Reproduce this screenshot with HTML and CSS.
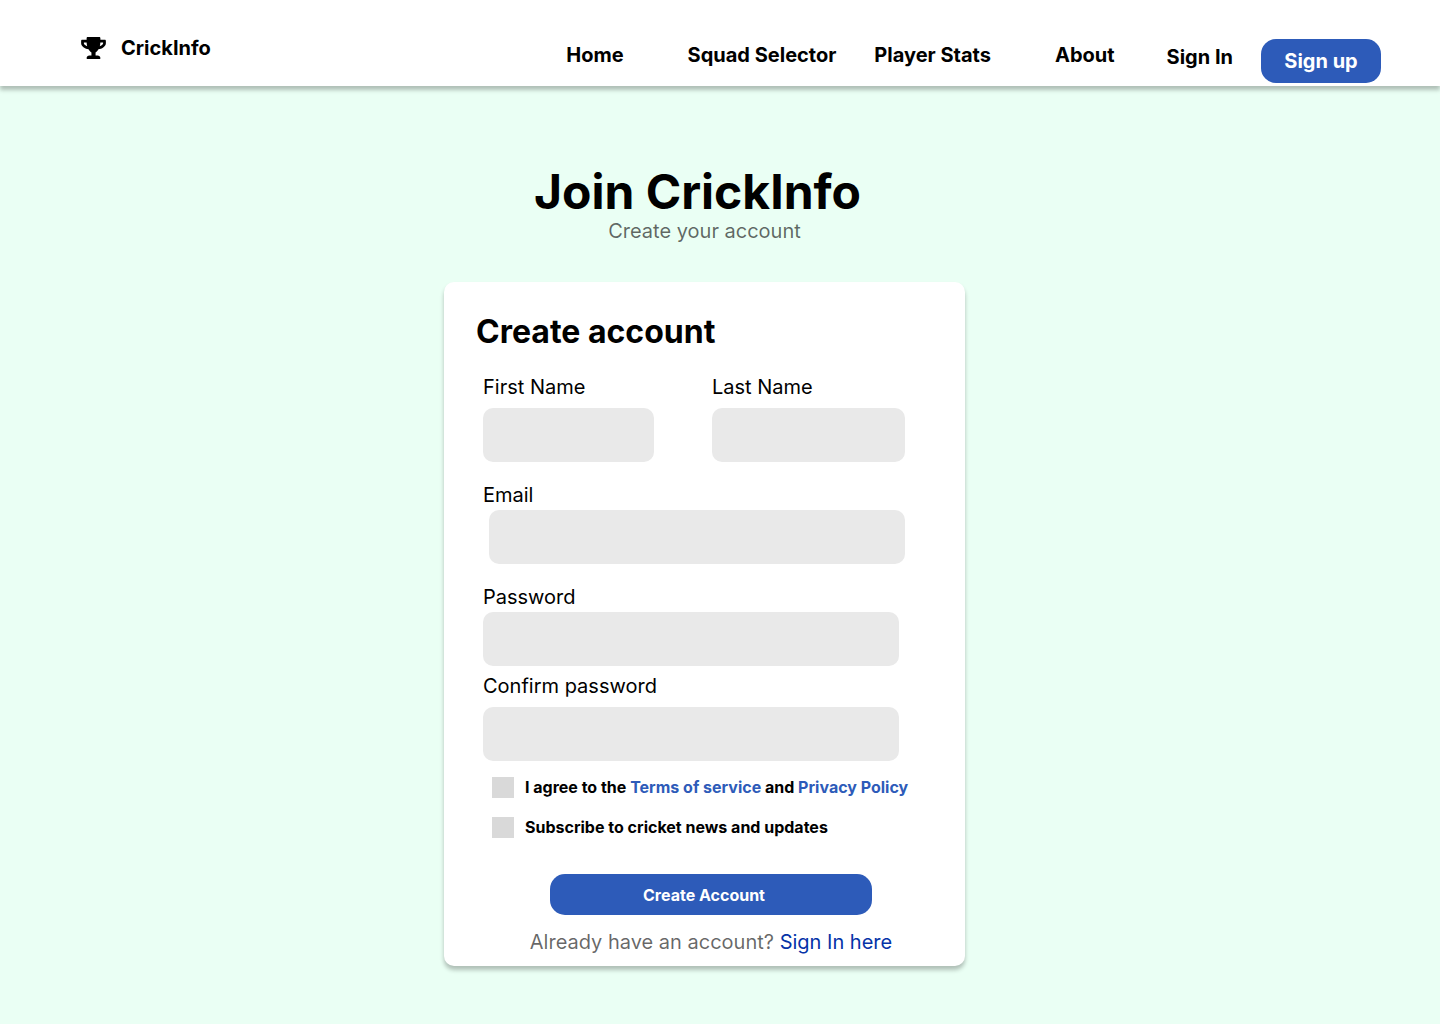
FILE: index.html
```html
<!DOCTYPE html>
<html lang="en">
<head>
<meta charset="utf-8">
<meta name="viewport" content="width=device-width, initial-scale=1">
<title>Join CrickInfo</title>
<link rel="stylesheet" href="styles.css">
</head>
<body>
<header class="site-header">
  <a class="brand" href="#">
    <svg class="brand-icon" viewBox="0 0 576 512" aria-hidden="true"><path d="M552 64H448V24c0-13.300-10.700-24-24-24H152c-13.300 0-24 10.700-24 24v40H24C10.700 64 0 74.700 0 88v56c0 35.700 22.500 72.400 61.900 100.700 31.500 22.700 69.800 37.100 110 41.700C203.300 338.500 240 360 240 360v72h-48c-35.300 0-64 20.700-64 56v12c0 6.600 5.400 12 12 12h296c6.600 0 12-5.400 12-12v-12c0-35.300-28.700-56-64-56h-48v-72s36.700-21.500 68.100-73.600c40.300-4.600 78.600-19 110-41.700 39.300-28.300 61.900-65 61.900-100.700V88c0-13.300-10.700-24-24-24zM99.300 192.800C74.900 175.200 64 155.600 64 144v-16h64.200c1 32.600 5.800 61.200 12.800 86.200-15.100-5.200-29.200-12.400-41.700-21.400zM512 144c0 16.100-17.700 36.100-35.300 48.800-12.500 9-26.700 16.200-41.800 21.400 7-25 11.800-53.600 12.800-86.200H512v16z"/></svg>
    <span>CrickInfo</span>
  </a>
  <nav class="nav">
    <div class="nav-pages">
      <a href="#">Home</a>
      <div class="nav-tools">
        <a href="#">Squad Selector</a>
        <a href="#">Player Stats</a>
      </div>
      <a href="#">About</a>
    </div>
    <div class="nav-account">
      <a href="#">Sign In</a>
      <button class="button button-signup" type="button">Sign up</button>
    </div>
  </nav>
</header>
<main class="page">
  <div class="intro">
    <h1>Join CrickInfo</h1>
    <p>Create your account</p>
  </div>
  <section class="card">
    <h2>Create account</h2>
    <form class="form">
      <div class="name-row">
        <div class="field field-roomy">
          <label for="first-name">First Name</label>
          <input id="first-name" type="text">
        </div>
        <div class="field field-roomy">
          <label for="last-name">Last Name</label>
          <input id="last-name" type="text">
        </div>
      </div>
      <div class="field field-wide field-end">
        <label for="email">Email</label>
        <input id="email" type="email">
      </div>
      <div class="field field-wide">
        <label for="password">Password</label>
        <input id="password" type="password">
      </div>
      <div class="field field-wide field-roomy field-close">
        <label for="confirm">Confirm password</label>
        <input id="confirm" type="password">
      </div>
      <div class="checks">
        <div class="check">
          <input id="terms" type="checkbox">
          <label for="terms">I agree to the <a href="#">Terms of service</a> and <a href="#">Privacy Policy</a></label>
        </div>
        <div class="check">
          <input id="news" type="checkbox">
          <label for="news">Subscribe to cricket news and updates</label>
        </div>
      </div>
      <div class="actions">
        <button class="button button-create" type="submit">Create Account</button>
        <p>Already have an account? <a href="#">Sign In here</a></p>
      </div>
    </form>
  </section>
</main>
</body>
</html>
```

FILE: styles.css
```css
* {
  box-sizing: border-box;
}

body {
  margin: 0;
  background: #eafff4;
  color: #000;
  font-family: Inter, "Liberation Sans", sans-serif;
  font-size: 20px;
  line-height: 24px;
}

h1, h2, p {
  margin: 0;
}

a {
  color: inherit;
  text-decoration: none;
}

.button {
  border: 0;
  border-radius: 15px;
  background: #2d5bb9;
  color: #fff;
  font-family: inherit;
  font-weight: 700;
  cursor: pointer;
}

.site-header {
  display: flex;
  justify-content: space-between;
  align-items: flex-start;
  padding: 36px 59px 3px 81px;
  background: #fff;
  box-shadow: 0 4px 4px rgba(0, 0, 0, 0.25);
  font-weight: 700;
}

.brand {
  display: flex;
  align-items: center;
  gap: 15px;
}

.brand-icon {
  width: 25px;
  height: 22px;
}

.nav {
  display: flex;
  align-items: center;
  gap: 52px;
  padding-top: 3px;
}

.nav-pages {
  display: flex;
  gap: 64px;
  padding-bottom: 12px;
}

.nav-tools {
  display: flex;
  gap: 38px;
}

.nav-account {
  display: flex;
  gap: 28px;
}

.nav-account a {
  padding-top: 6px;
}

.button-signup {
  width: 120px;
  height: 44px;
  font-size: 20px;
}

.page {
  display: flex;
  flex-direction: column;
  align-items: center;
  gap: 39px;
  padding: 79px 31px 58px 0;
}

.intro {
  text-align: center;
}

.intro h1 {
  padding-right: 14px;
  font-size: 48px;
  line-height: 54px;
}

.intro p,
.actions p {
  color: rgba(0, 0, 0, 0.6);
}

.card {
  width: 100%;
  max-width: 521px;
  padding: 30px 60px 12px 39px;
  border-radius: 10px;
  background: #fff;
  box-shadow: 0 4px 4px rgba(0, 0, 0, 0.25);
}

.card h2 {
  margin-left: -7px;
  font-size: 32px;
  line-height: 40px;
}

.form {
  display: flex;
  flex-direction: column;
  padding-top: 23px;
}

.name-row {
  display: grid;
  grid-template-columns: minmax(0, 171fr) minmax(0, 193fr);
  gap: 58px;
}

.field {
  display: flex;
  flex-direction: column;
  gap: 3px;
}

.field-roomy {
  gap: 9px;
}

.field-wide {
  margin-top: 21px;
}

.field-close {
  margin-top: 8px;
}

.field-wide input {
  max-width: 416px;
}

.field-end input {
  align-self: flex-end;
}

.field input {
  width: 100%;
  height: 54px;
  padding: 0 16px;
  border: 0;
  border-radius: 10px;
  background: #e9e9e9;
  font: inherit;
}

.checks {
  display: flex;
  flex-direction: column;
  gap: 19px;
  padding: 16px 0 0 9px;
}

.check {
  display: flex;
  gap: 11px;
  font-size: 16px;
  line-height: 20px;
  font-weight: 700;
  white-space: nowrap;
}

.check input {
  appearance: none;
  flex: none;
  width: 22px;
  height: 21px;
  margin: 0;
  background: #d9d9d9;
}

.check a {
  color: #2d5bb9;
}

.actions {
  display: flex;
  flex-direction: column;
  align-items: center;
  gap: 15px;
  padding: 36px 0 0 34px;
  white-space: nowrap;
}

.button-create {
  width: 322px;
  height: 41px;
  padding: 0 14px 0 0;
  font-size: 16px;
}

.actions a {
  color: #0533a8;
}
```
